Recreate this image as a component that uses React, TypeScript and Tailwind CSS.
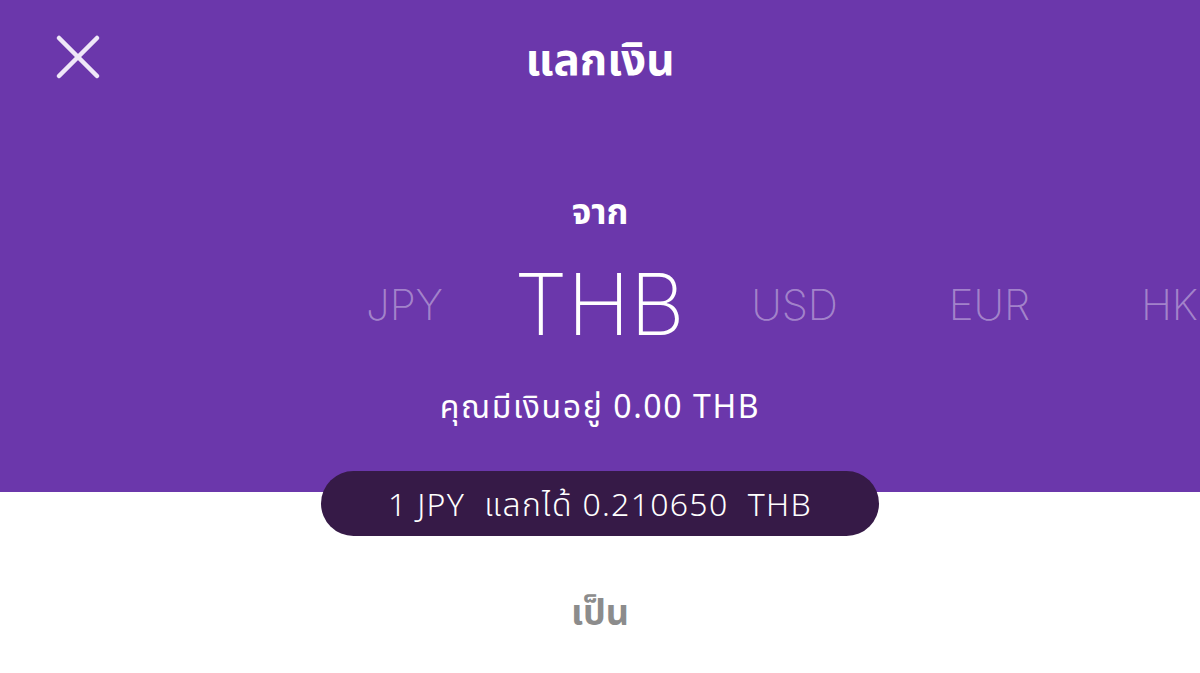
import { X } from "lucide-react";

const currencies = ["JPY", "THB", "USD", "EUR", "HKD", "GBP"];

export default function App() {
  const active = "THB";
  return (
    <div
      className="w-[1200px] h-[673px] overflow-hidden bg-white"
      style={{ fontFamily: '"Noto Sans", "Noto Sans Thai", "Liberation Sans", sans-serif' }}
    >
      {/* purple header */}
      <div className="h-[492px] bg-[#6b37ab] flex flex-col">
        <div className="relative h-[116px] flex items-center justify-center">
          <button className="absolute left-[40px] top-[19px] text-[#efe7f8]">
            <X size={76} strokeWidth={1.45} />
          </button>
          <h1 className="text-[44px] font-bold text-white leading-none">แลกเงิน</h1>
        </div>

        <div className="mt-[77px] text-center text-[35px] font-bold text-white leading-none">จาก</div>

        {/* currency carousel, HK cut at right edge like the reference */}
        <div className="mt-[25px] flex items-center pl-[307px] h-[104px] overflow-hidden whitespace-nowrap">
          {currencies.map((c) => (
            <div key={c} className="w-[195px] shrink-0 text-center">
              {c === active ? (
                <span className="text-[85px] font-extralight text-white leading-[1.15]" style={{ fontFamily: "Inter, sans-serif" }}>
                  {c}
                </span>
              ) : (
                <span className="text-[42px] font-extralight text-white/40 leading-[1.15]" style={{ fontFamily: "Inter, sans-serif" }}>
                  {c}
                </span>
              )}
            </div>
          ))}
        </div>

        <div className="mt-[33px] text-center text-[32px] font-normal tracking-[1.6px] text-white leading-none">
          คุณมีเงินอยู่ 0.00 THB
        </div>
      </div>

      {/* rate pill */}
      <div className="-mt-[21px] flex justify-center">
        <div className="w-[558px] h-[65px] rounded-full bg-[#361a47] flex items-center justify-center text-[32px] font-light tracking-[1.3px] text-white whitespace-pre">
          1 JPY  แลกได้ 0.210650  THB
        </div>
      </div>

      <div className="mt-[58px] text-center text-[36px] font-bold text-[#8c8c8c] leading-none">เป็น</div>
    </div>
  );
}
